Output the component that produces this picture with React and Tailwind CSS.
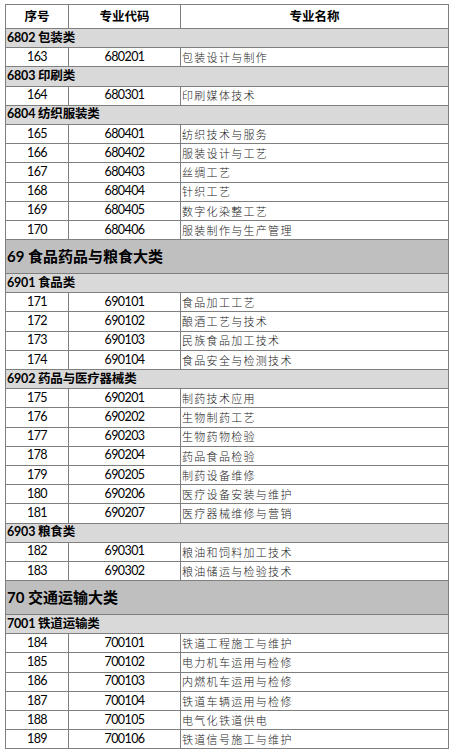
import React from "react";

const rows = [
  { t: "sec", text: "6802 包装类" },
  { t: "row", n: "163", c: "680201", name: "包装设计与制作" },
  { t: "sec", text: "6803 印刷类" },
  { t: "row", n: "164", c: "680301", name: "印刷媒体技术" },
  { t: "sec", text: "6804 纺织服装类" },
  { t: "row", n: "165", c: "680401", name: "纺织技术与服务" },
  { t: "row", n: "166", c: "680402", name: "服装设计与工艺" },
  { t: "row", n: "167", c: "680403", name: "丝绸工艺" },
  { t: "row", n: "168", c: "680404", name: "针织工艺" },
  { t: "row", n: "169", c: "680405", name: "数字化染整工艺" },
  { t: "row", n: "170", c: "680406", name: "服装制作与生产管理" },
  { t: "big", text: "69 食品药品与粮食大类" },
  { t: "sec", text: "6901 食品类" },
  { t: "row", n: "171", c: "690101", name: "食品加工工艺" },
  { t: "row", n: "172", c: "690102", name: "酿酒工艺与技术" },
  { t: "row", n: "173", c: "690103", name: "民族食品加工技术" },
  { t: "row", n: "174", c: "690104", name: "食品安全与检测技术" },
  { t: "sec", text: "6902 药品与医疗器械类" },
  { t: "row", n: "175", c: "690201", name: "制药技术应用" },
  { t: "row", n: "176", c: "690202", name: "生物制药工艺" },
  { t: "row", n: "177", c: "690203", name: "生物药物检验" },
  { t: "row", n: "178", c: "690204", name: "药品食品检验" },
  { t: "row", n: "179", c: "690205", name: "制药设备维修" },
  { t: "row", n: "180", c: "690206", name: "医疗设备安装与维护" },
  { t: "row", n: "181", c: "690207", name: "医疗器械维修与营销" },
  { t: "sec", text: "6903 粮食类" },
  { t: "row", n: "182", c: "690301", name: "粮油和饲料加工技术" },
  { t: "row", n: "183", c: "690302", name: "粮油储运与检验技术" },
  { t: "big", text: "70 交通运输大类" },
  { t: "sec", text: "7001 铁道运输类" },
  { t: "row", n: "184", c: "700101", name: "铁道工程施工与维护" },
  { t: "row", n: "185", c: "700102", name: "电力机车运用与检修" },
  { t: "row", n: "186", c: "700103", name: "内燃机车运用与检修" },
  { t: "row", n: "187", c: "700104", name: "铁道车辆运用与检修" },
  { t: "row", n: "188", c: "700105", name: "电气化铁道供电" },
  { t: "row", n: "189", c: "700106", name: "铁道信号施工与维护" },
];

const num = "font-['Lato','Noto_Sans_CJK_SC',sans-serif]";

const App = () => {
  return (
    <div className="w-[454px] h-[754px] bg-white pt-[4px] pl-[5px] overflow-hidden text-black">
      <div className="w-[444px] border-l border-r border-t border-[#7f7f7f]">
        {/* header */}
        <div className="flex h-[24px] border-b border-[#7f7f7f] font-['Noto_Sans_CJK_SC',sans-serif] font-bold text-[12.5px]">
          <div className="w-[63px] border-r border-[#7f7f7f] flex items-center justify-center">序号</div>
          <div className="w-[112px] border-r border-[#7f7f7f] flex items-center justify-center">专业代码</div>
          <div className="flex-1 flex items-center justify-center">专业名称</div>
        </div>
        {rows.map((r, i) => {
          if (r.t === "big") {
            return (
              <div
                key={i}
                className={`h-[34px] bg-[#bfbfbf] border-b border-[#7f7f7f] flex items-center pl-[1px] text-[15px] font-bold ${num}`}
              >
                {r.text}
              </div>
            );
          }
          if (r.t === "sec") {
            return (
              <div
                key={i}
                className={`h-[19.2px] bg-[#d9d9d9] border-b border-[#7f7f7f] flex items-center pl-[1px] text-[12.5px] font-bold tracking-[-0.2px] ${num}`}
              >
                {r.text}
              </div>
            );
          }
          return (
            <div key={i} className="flex h-[19.2px] border-b border-[#7f7f7f]">
              <div className={`w-[63px] border-r border-[#7f7f7f] flex items-center justify-center text-[12.5px] tracking-[-0.6px] ${num}`}>
                {r.n}
              </div>
              <div className={`w-[112px] border-r border-[#7f7f7f] flex items-center justify-center text-[12.5px] tracking-[-0.6px] ${num}`}>
                {r.c}
              </div>
              <div className="flex-1 flex items-center pl-[1px] text-[11px] tracking-[1.3px] font-light font-['Noto_Sans_CJK_SC',sans-serif] text-[#222]">
                {r.name}
              </div>
            </div>
          );
        })}
      </div>
    </div>
  );
};

export default App;
